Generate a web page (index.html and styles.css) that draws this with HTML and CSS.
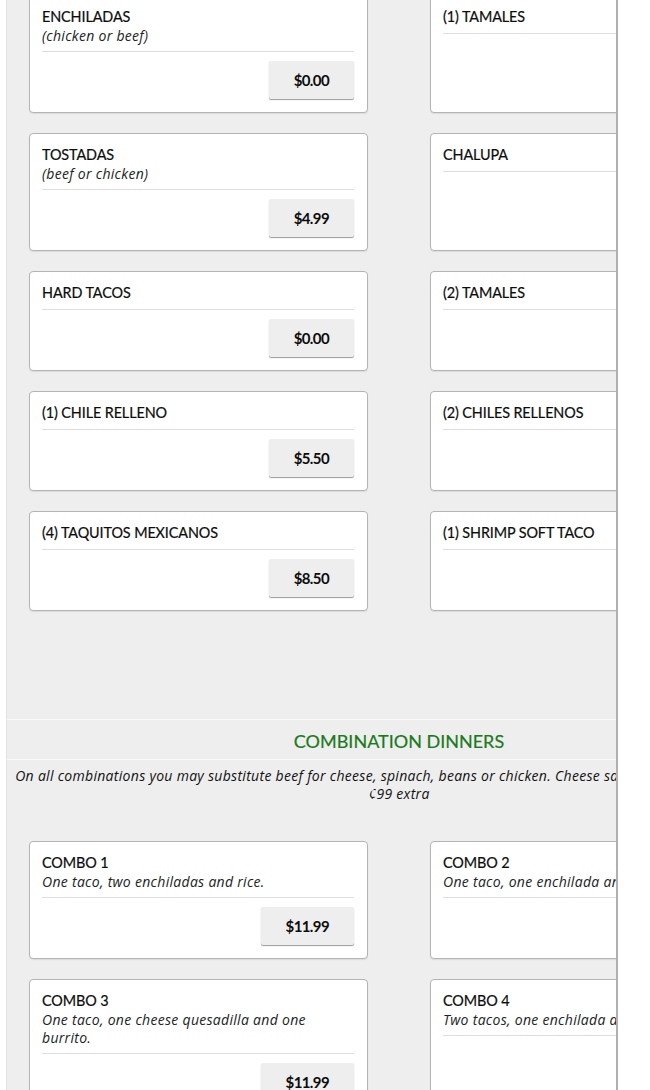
FILE: index.html
```html
<!DOCTYPE html>
<html>
<head>
<meta charset="utf-8">
<link rel="stylesheet" href="styles.css">
</head>
<body>
<div class="frame">
  <div class="menu">
    <div class="grid first">
      <div class="card">
        <div class="card-head"><div class="name">ENCHILADAS</div><div class="desc">(chicken or beef)</div></div>
        <div class="price-row"><button class="price">$0.00</button></div>
      </div>
      <div class="card">
        <div class="card-head"><div class="name">(1) TAMALES</div></div>
        <div class="price-row"><button class="price">$0.00</button></div>
      </div>
      <div class="card">
        <div class="card-head"><div class="name">TOSTADAS</div><div class="desc">(beef or chicken)</div></div>
        <div class="price-row"><button class="price">$4.99</button></div>
      </div>
      <div class="card">
        <div class="card-head"><div class="name">CHALUPA</div></div>
        <div class="price-row"><button class="price">$0.00</button></div>
      </div>
      <div class="card">
        <div class="card-head"><div class="name">HARD TACOS</div></div>
        <div class="price-row"><button class="price">$0.00</button></div>
      </div>
      <div class="card">
        <div class="card-head"><div class="name">(2) TAMALES</div></div>
        <div class="price-row"><button class="price">$0.00</button></div>
      </div>
      <div class="card">
        <div class="card-head"><div class="name">(1) CHILE RELLENO</div></div>
        <div class="price-row"><button class="price">$5.50</button></div>
      </div>
      <div class="card">
        <div class="card-head"><div class="name">(2) CHILES RELLENOS</div></div>
        <div class="price-row"><button class="price">$9.99</button></div>
      </div>
      <div class="card">
        <div class="card-head"><div class="name">(4) TAQUITOS MEXICANOS</div></div>
        <div class="price-row"><button class="price">$8.50</button></div>
      </div>
      <div class="card">
        <div class="card-head"><div class="name">(1) SHRIMP SOFT TACO</div></div>
        <div class="price-row"><button class="price">$0.00</button></div>
      </div>
    </div>

    <div class="section-head">
      <h2 class="section-title">COMBINATION DINNERS</h2>
    </div>
    <p class="section-note">On all combinations you may substitute beef for cheese, spinach, beans or chicken. Cheese sauce, sour cream or salsas<br>¢99 extra</p>

    <div class="grid">
      <div class="card">
        <div class="card-head"><div class="name">COMBO 1</div><div class="desc">One taco, two enchiladas and rice.</div></div>
        <div class="price-row"><button class="price">$11.99</button></div>
      </div>
      <div class="card">
        <div class="card-head"><div class="name">COMBO 2</div><div class="desc">One taco, one enchilada and rice.</div></div>
        <div class="price-row"><button class="price">$11.99</button></div>
      </div>
      <div class="card">
        <div class="card-head"><div class="name">COMBO 3</div><div class="desc">One taco, one cheese quesadilla and one burrito.</div></div>
        <div class="price-row"><button class="price">$11.99</button></div>
      </div>
      <div class="card">
        <div class="card-head"><div class="name">COMBO 4</div><div class="desc">Two tacos, one enchilada and queso.</div></div>
        <div class="price-row"><button class="price">$11.99</button></div>
      </div>
    </div>
  </div>
</div>
</body>
</html>
```

FILE: styles.css
```css
html, body {
  margin: 0;
  padding: 0;
  background: #fff;
  height: 100%;
  overflow: hidden;
}
.frame {
  margin-left: 6px;
  width: 609px;
  height: 1090px;
  background: #eeeeee;
  border-left: 1px solid #e2e2e2;
  border-right: 2px solid #b0b0b0;
  overflow: hidden;
  font-family: "Lato", "Liberation Sans", sans-serif;
  color: #111;
}
.menu {
  width: 784px;
}
.grid {
  display: grid;
  grid-template-columns: 339px 339px;
  column-gap: 62px;
  row-gap: 20px;
  padding: 0 22px;
}
.grid.first {
  margin-top: -5px;
  padding-bottom: 108px;
}
.card {
  background: #fff;
  border: 1px solid #b4b4b4;
  border-radius: 4px;
  box-shadow: 0 1px 1px rgba(0, 0, 0, 0.08);
  padding: 10px 13px 13px 12px;
  display: flex;
  flex-direction: column;
}
.card-head {
  border-bottom: 1px solid #dedede;
  padding-bottom: 6px;
}
.name {
  font-size: 14.4px;
  line-height: 21px;
  color: #0c0c0c;
  letter-spacing: -0.1px;
  -webkit-text-stroke: 0.2px #0c0c0c;
}
.desc {
  font-family: "Open Sans", "Lato", sans-serif;
  font-size: 14px;
  font-style: italic;
  letter-spacing: 0.3px;
  line-height: 18px;
  color: #222;
}
.price-row {
  display: flex;
  justify-content: flex-end;
  margin-top: 9px;
}
.price {
  font-family: "Lato", "Liberation Sans", sans-serif;
  font-weight: 700;
  font-size: 15px;
  letter-spacing: -0.6px;
  color: #0c0c0c;
  height: 38px;
  padding: 0 25px;
  border: none;
  border-radius: 2px;
  background: #eeeeee;
  box-shadow: 0 1px 1px rgba(0, 0, 0, 0.4);
}
.section-head {
  border-top: 1px solid #fafafa;
  border-bottom: 1px solid #fafafa;
  padding-top: 4px;
}
.section-title {
  margin: 0;
  text-align: center;
  font-size: 18px;
  font-weight: 400;
  line-height: 35px;
  color: #1b7a1b;
  -webkit-text-stroke: 0.2px #1b7a1b;
}
.section-note {
  margin: 7px 0 38px;
  padding: 0;
  text-align: center;
  font-family: "Open Sans", "Lato", sans-serif;
  font-size: 14px;
  font-style: italic;
  letter-spacing: 0.3px;
  line-height: 18px;
  color: #111;
}
```
